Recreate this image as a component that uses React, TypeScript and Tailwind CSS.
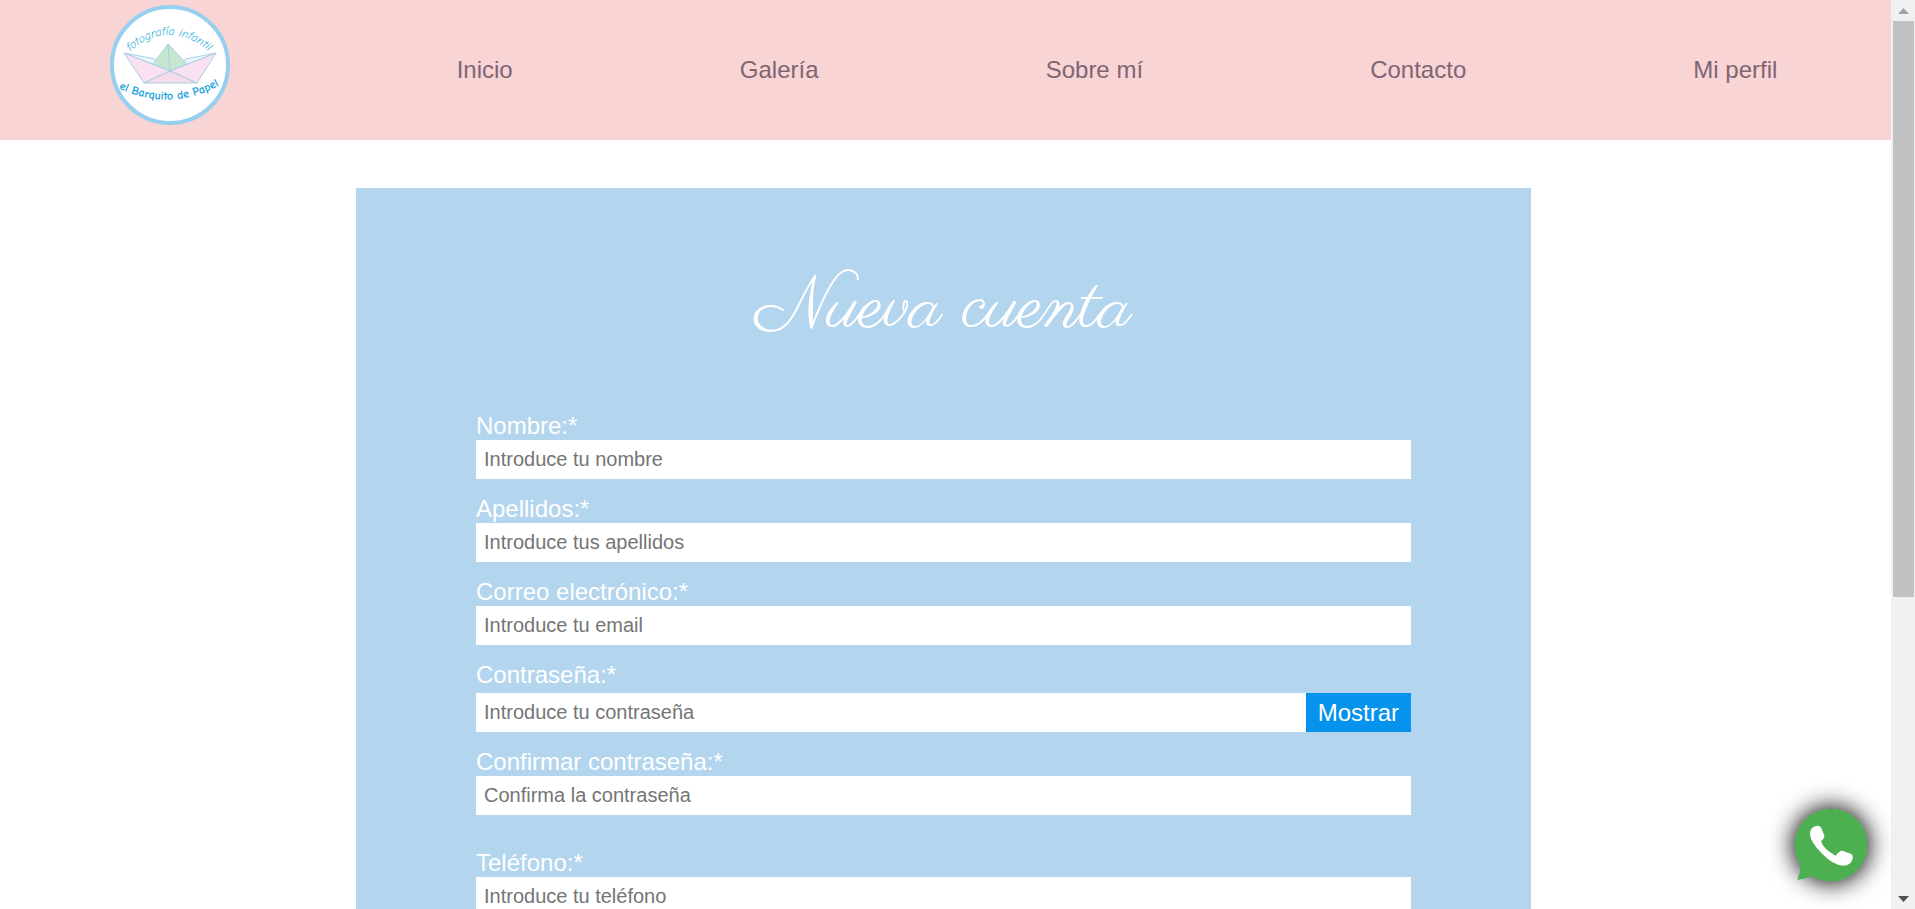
import { useState } from "react";

const links = ["Inicio", "Galería", "Sobre mí", "Contacto", "Mi perfil"];

const inputClass =
  "h-[39px] w-full min-w-0 flex-1 bg-white px-2 text-[20px] text-[#333333] placeholder:text-[#757575] outline-none";

function Logo() {
  return (
    <svg viewBox="0 0 120 120" className="block size-[120px]" role="img">
      <defs>
        <path id="arc-top" d="M16 50 Q58 10 103 50" />
        <path id="arc-bottom" d="M6 82 Q60 109 112 79" />
      </defs>
      <circle cx="60" cy="60" r="58" fill="#ffffff" stroke="#97cfee" strokeWidth="4" />
      <g stroke="#a9cfe6" strokeWidth="1" strokeLinejoin="round">
        <path d="M14 48 L45 54 L60 66 Z" fill="#eef8fc" />
        <path d="M106 48 L76 54 L60 66 Z" fill="#eef8fc" />
        <path d="M58 39 L77 59 L60 66 L43 59 Z" fill="#c5e6cf" />
        <path d="M58 39 L60 66" fill="none" />
        <path d="M14 48 L60 66 L34 78 Z" fill="#f9e1f1" />
        <path d="M106 48 L60 66 L87 78 Z" fill="#f9e1f1" />
        <path d="M34 78 L60 66 L87 78 Z" fill="#f5dbe9" />
      </g>
      <text
        fill="#3fb4e0"
        fontSize="12"
        fontStyle="italic"
        fontFamily="'Comic Neue', 'Open Sans', sans-serif"
        textAnchor="middle"
      >
        <textPath href="#arc-top" startOffset="50%">
          fotografía infantil
        </textPath>
      </text>
      <text
        fill="#1ba3dc"
        fontSize="12"
        fontWeight="700"
        fontFamily="'Comic Neue', 'Open Sans', sans-serif"
        textAnchor="middle"
      >
        <textPath href="#arc-bottom" startOffset="50%">
          el Barquito de Papel
        </textPath>
      </text>
    </svg>
  );
}

function Header() {
  return (
    <header className="bg-[#f8d4d4]">
      <nav className="-ml-1 flex h-[140px] items-center justify-around text-[24px] text-[#7f6574]">
        <a href="#inicio" className="pb-[10px]">
          <Logo />
        </a>
        {links.map((label) => (
          <a key={label} href="#nav">
            {label}
          </a>
        ))}
      </nav>
    </header>
  );
}

function Field({ id, label, placeholder, type = "text" }: {
  id: string;
  label: string;
  placeholder: string;
  type?: string;
}) {
  return (
    <div className="flex flex-col">
      <label htmlFor={id} className="h-7 leading-7">
        {label}
      </label>
      <div className="flex">
        <input id={id} type={type} placeholder={placeholder} className={inputClass} />
      </div>
    </div>
  );
}

function PasswordField() {
  const [visible, setVisible] = useState(false);
  return (
    <div className="flex flex-col gap-1">
      <label htmlFor="password" className="h-7 leading-7">
        Contraseña:*
      </label>
      <div className="flex">
        <input
          id="password"
          type={visible ? "text" : "password"}
          placeholder="Introduce tu contraseña"
          className={inputClass}
        />
        <button
          type="button"
          onClick={() => setVisible(!visible)}
          className="h-[39px] bg-[#0693ed] px-3 text-white"
        >
          Mostrar
        </button>
      </div>
    </div>
  );
}

function WhatsAppButton() {
  return (
    <a
      href="#whatsapp"
      className="absolute right-6 bottom-7 size-[72px] rounded-full shadow-[0_0_24px_2px_#000000]"
    >
      <svg viewBox="105 85 216 216" className="block size-full overflow-visible">
        <circle cx="213" cy="193" r="109" fill="#4caf50" />
        <path d="M122 250 Q122 275 112 298 L152 289 L180 260 Z" fill="#4caf50" />
        <path
          d="M150 160 Q150 140 168 136 Q178 133 184 142 L193 165 Q194 172 183 181 Q190 206 227 225 Q238 210 247 210 L272 219 Q280 222 278 234 Q272 254 250 255 Q220 255 185 218 Q150 182 150 160 Z"
          fill="#ffffff"
        />
      </svg>
    </a>
  );
}

function Scrollbar() {
  return (
    <div className="flex w-6 flex-col bg-[#f1f1f1]">
      <div className="flex h-[21px] items-center justify-center">
        <svg viewBox="0 0 11 6" className="h-[6px] w-[11px]">
          <path d="M0 6 L5.5 0 L11 6 Z" fill="#a3a3a3" />
        </svg>
      </div>
      <div className="flex-1 pr-px pl-0.5">
        <div className="h-[66.4%] bg-[#c1c1c1]" />
      </div>
      <div className="flex h-[21px] items-center justify-center">
        <svg viewBox="0 0 11 6" className="h-[6px] w-[11px]">
          <path d="M0 0 L5.5 6 L11 0 Z" fill="#505050" />
        </svg>
      </div>
    </div>
  );
}

export default function App() {
  return (
    <div className="flex h-screen bg-white font-['Liberation_Sans',Arial,sans-serif]">
      <div className="relative min-w-0 flex-1">
        <div className="h-full overflow-x-hidden overflow-y-auto [scrollbar-width:none]">
          <Header />
          <main className="pt-12 pr-1 pb-12">
            <form className="mx-auto max-w-[1175px] bg-[#b3d5ee] px-[120px] pt-[77px] pb-[120px] text-[24px] text-white">
              <h1 className="text-center font-['Parisienne','Liberation_Serif',cursive] text-[72px] leading-[88px]">
                Nueva cuenta
              </h1>
              <div className="mt-[59px] flex flex-col gap-4">
                <Field id="name" label="Nombre:*" placeholder="Introduce tu nombre" />
                <Field id="surname" label="Apellidos:*" placeholder="Introduce tus apellidos" />
                <Field id="email" type="email" label="Correo electrónico:*" placeholder="Introduce tu email" />
                <PasswordField />
                <Field
                  id="confirm"
                  type="password"
                  label="Confirmar contraseña:*"
                  placeholder="Confirma la contraseña"
                />
                <div className="pt-[18px]">
                  <Field id="phone" type="tel" label="Teléfono:*" placeholder="Introduce tu teléfono" />
                </div>
              </div>
            </form>
          </main>
        </div>
        <WhatsAppButton />
      </div>
      <Scrollbar />
    </div>
  );
}
